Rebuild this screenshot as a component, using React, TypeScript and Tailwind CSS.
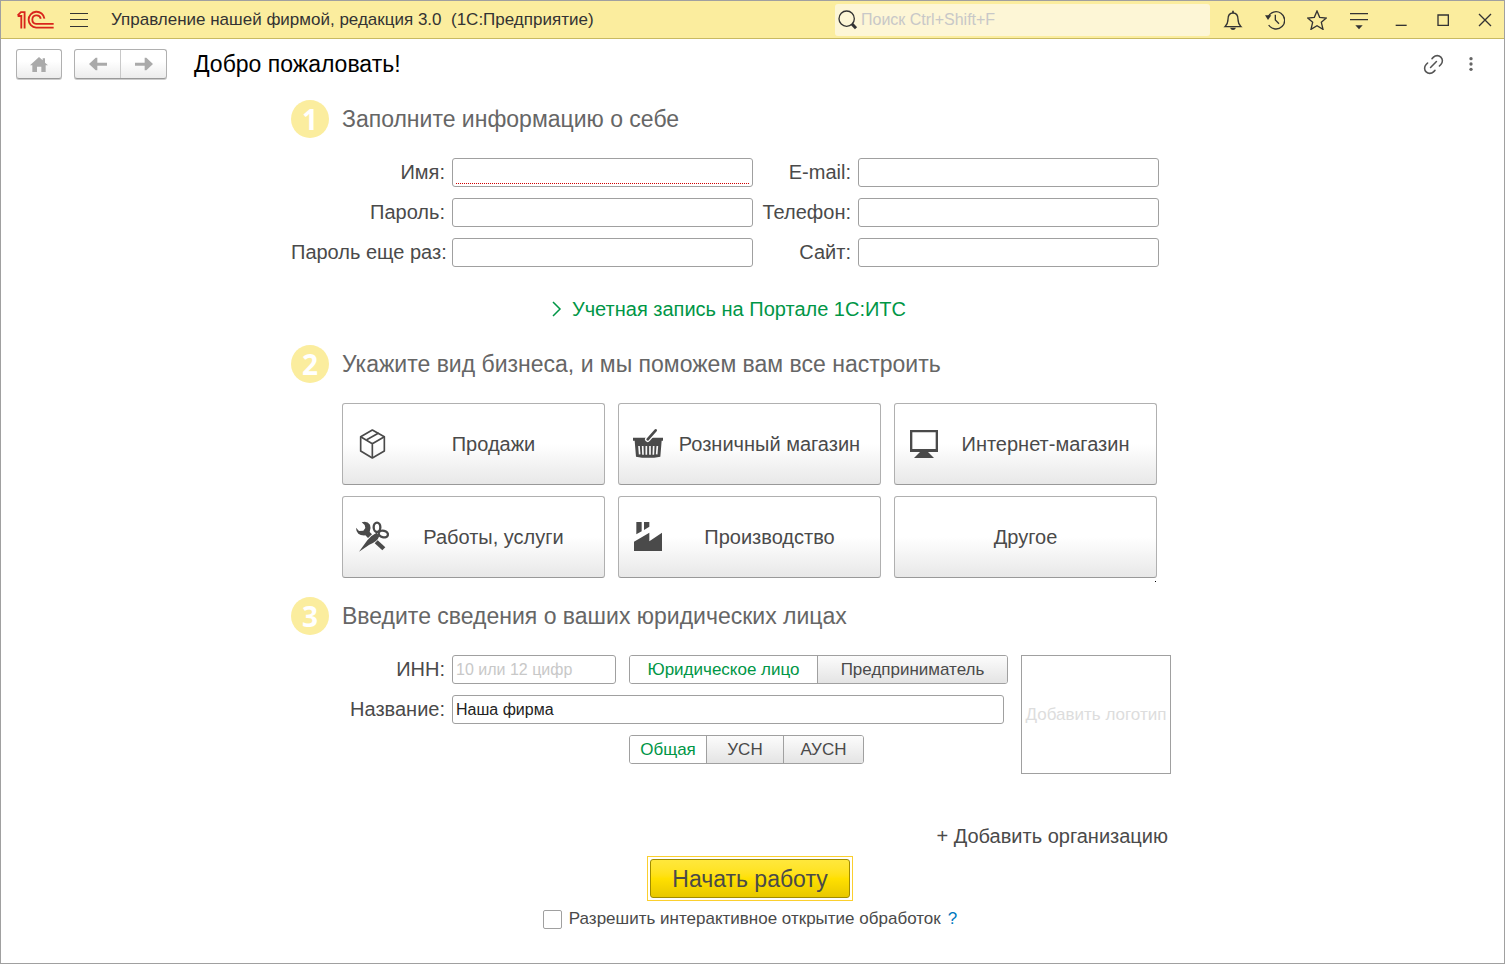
import { useState, type ReactNode } from 'react';
import { Link2 } from 'lucide-react';

const inputClass =
  'h-[29px] w-full min-w-0 rounded-[3px] border border-[#a0a0a0] bg-white px-[3px] text-[16px] text-[#222] outline-none placeholder:text-[#c8c8c8]';

const Logo = () => (
  <svg viewBox="50 28 112 57" className="h-[19px] w-[37px]" fill="none" stroke="#d9251c" strokeWidth="5.5">
    <path d="M52 44 L62 34 H73 V84" />
    <path d="M52 46 H63 V84" />
    <path d="M133 54 A24 24 0 1 0 108 81 H161" />
    <path d="M122 54 A13 13 0 1 0 108 70 H161" />
  </svg>
);

type HeaderIconProps = { label: string; viewBox: string; children: ReactNode };

const HeaderButton = ({ label, viewBox, children }: HeaderIconProps) => (
  <button aria-label={label} className="flex h-8 w-[38px] items-center justify-center">
    <svg viewBox={viewBox} className="h-5 w-5" fill="none" stroke="#333" strokeWidth="4">
      {children}
    </svg>
  </button>
);

const TitleBar = () => (
  <header className="flex h-[38px] items-center border-b border-[#c8ba62] bg-[#fbed9e]">
    <div className="pl-4">
      <Logo />
    </div>
    <button aria-label="Меню" className="ml-4 flex h-[14px] w-[18px] flex-col justify-between">
      <span className="h-px w-full bg-[#333]" />
      <span className="h-px w-full bg-[#333]" />
      <span className="h-px w-full bg-[#333]" />
    </button>
    <div className="ml-[23px] whitespace-pre text-[17px] text-[#333]">
      Управление нашей фирмой, редакция 3.0  (1С:Предприятие)
    </div>
    <label className="mr-1 ml-auto flex h-8 w-[375px] items-center rounded-[3px] bg-[#fdf6d6] pl-[3px]">
      <svg viewBox="0 0 60 60" className="h-5 w-5 shrink-0" fill="none" stroke="#333" strokeWidth="4">
        <circle cx="26" cy="26" r="23" />
        <path d="M42 42 L54 55" strokeWidth="9" />
      </svg>
      <input
        aria-label="Поиск"
        placeholder="Поиск Ctrl+Shift+F"
        className="ml-[3px] min-w-0 flex-1 bg-transparent text-[16px] outline-none placeholder:text-[#c8c8c8]"
      />
    </label>
    <div className="flex gap-1">
      <HeaderButton label="Уведомления" viewBox="54 28 60 60">
        <path d="M60 78 C66 72 69 66 69 56 C69 44 74 37 84 37 C94 37 99 44 99 56 C99 66 102 72 108 78 Z" />
        <path d="M84 30 V37" strokeWidth="5" />
        <path d="M75 81 H93 Q90 88 84 88 Q78 88 75 81 Z" fill="#333" stroke="none" />
      </HeaderButton>
      <HeaderButton label="История" viewBox="180 28 60 60">
        <path d="M189 49 A26 26 0 1 1 191 73" />
        <path d="M180 44 H199 L189 58 Z" fill="#333" stroke="none" />
        <path d="M211 42 V58 L222 69" />
      </HeaderButton>
      <HeaderButton label="Избранное" viewBox="306 28 60 60">
        <path d="M336 31 L344 50 L364 52 L349 65 L354 86 L336 75 L318 86 L323 65 L308 52 L328 50 Z" />
      </HeaderButton>
      <HeaderButton label="Настройки" viewBox="432 28 60 60">
        <path d="M435 39 H489 M435 57 H489" />
        <path d="M451 74 H473 L462 86 Z" fill="#333" stroke="none" />
      </HeaderButton>
      <HeaderButton label="Свернуть" viewBox="559 28 60 60">
        <path d="M573 74 H606" />
      </HeaderButton>
      <HeaderButton label="Развернуть" viewBox="685 28 60 60">
        <path d="M700 43 H731 V74 H700 Z" />
      </HeaderButton>
      <HeaderButton label="Закрыть" viewBox="810 28 60 60">
        <path d="M822 40 L858 76 M858 40 L822 76" />
      </HeaderButton>
    </div>
  </header>
);

const toolClass = 'flex flex-1 items-center justify-center';
const toolGroupClass =
  'flex h-[30px] rounded-[3px] border border-[#b0b0b0] border-b-[#999] bg-linear-to-b from-white from-40% to-[#ececec] shadow-[0_1px_0_#ccc]';

const Toolbar = () => (
  <div className="flex items-center px-[15px] pt-[10px]">
    <div className={`${toolGroupClass} w-[46px]`}>
      <button aria-label="Домой" className={toolClass}>
        <svg viewBox="90 166 54 48" className="h-4 w-[18px]" fill="#aaa">
          <path d="M90 194 L117 169 L128 179 V173 H135 V186 L144 194 H137 V214 H124 V198 H111 V214 H97 V194 Z" />
        </svg>
      </button>
    </div>
    <div className={`${toolGroupClass} ml-3 w-[93px]`}>
      <button aria-label="Назад" className={toolClass}>
        <svg viewBox="267 172 54 42" className="h-[14px] w-[18px]" fill="#aaa">
          <path d="M267 193 L287 174 H292 V189 H321 V198 H292 V212 H287 Z" />
        </svg>
      </button>
      <button aria-label="Вперед" className={`${toolClass} border-l border-[#c8c8c8]`}>
        <svg viewBox="403 172 54 42" className="h-[14px] w-[18px]" fill="#aaa">
          <path d="M457 193 L437 174 H432 V189 H403 V198 H432 V212 H437 Z" />
        </svg>
      </button>
    </div>
    <h1 className="ml-[27px] text-[23px] leading-7 text-black">Добро пожаловать!</h1>
    <button aria-label="Ссылка" className="ml-auto flex w-[26px] justify-center">
      <Link2 size={25} strokeWidth={1.5} color="#555" className="-rotate-45" />
    </button>
    <button aria-label="Ещё" className="ml-[7px] flex w-9 justify-center">
      <svg viewBox="0 0 12 42" className="h-[14px] w-1" fill="#666">
        <circle cx="6" cy="5" r="5" />
        <circle cx="6" cy="21" r="5" />
        <circle cx="6" cy="37" r="5" />
      </svg>
    </button>
  </div>
);

const StepTitle = ({ step, children }: { step: number; children: ReactNode }) => (
  <div className="flex items-center gap-[13px]">
    <span className="flex h-[38px] w-[38px] items-center justify-center rounded-full bg-[#fbed9e] font-['Open_Sans',sans-serif] text-[28px] leading-none font-bold text-white">
      {step}
    </span>
    <h2 className="text-[23px] leading-7 text-[#666]">{children}</h2>
  </div>
);

const Field = ({ id, label, type = 'text', required = false }: { id: string; label: string; type?: string; required?: boolean }) => (
  <>
    <label htmlFor={id} className="text-right text-[20px] whitespace-nowrap">
      {label}
    </label>
    <div className="relative flex">
      <input id={id} type={type} className={inputClass} />
      {required && <span className="absolute inset-x-1 bottom-[3px] border-b border-dotted border-[#d00000]" />}
    </div>
  </>
);

const BoxIcon = () => (
  <svg viewBox="222 288 108 108" className="h-9 w-9 shrink-0" fill="none" stroke="#4a4a4a" strokeWidth="5">
    <path d="M277 300 L313 320 V363 L277 384 L242 363 V320 Z" strokeLinejoin="round" />
    <path d="M242 320 L277 341 L313 320 M277 341 V384" />
    <path d="M260 329 L296 309" strokeWidth="5" />
  </svg>
);

const BasketIcon = () => (
  <svg viewBox="60 108 108 108" className="h-9 w-9 shrink-0" fill="#4a4a4a">
    <path d="M69 143 H159 V152 H155 L151 200 Q114 207 78 200 L74 152 H69 Z" />
    <path d="M87 168 L89 193 M98 168 L99 194 M109 168 V194 M120 168 V194 M131 168 L130 194 M142 168 L140 193" stroke="#f8f8f8" strokeWidth="5" />
    <path d="M113 148 L137 121" stroke="#fff" strokeWidth="16" strokeLinecap="round" />
    <path d="M113 148 L137 121" stroke="#4a4a4a" strokeWidth="8" strokeLinecap="round" />
  </svg>
);

const MonitorIcon = () => (
  <svg viewBox="63 108 108 108" className="h-9 w-9 shrink-0" fill="#4a4a4a">
    <path d="M75 120 H159 V186 H75 Z M82 127 V177 H152 V127 Z" fillRule="evenodd" />
    <path d="M105 186 H129 L147 204 H87 Z" />
  </svg>
);

const ToolsIcon = () => (
  <svg viewBox="222 567 108 108" className="h-9 w-9 shrink-0" fill="#4a4a4a">
    <path d="M228 593 L237 603 L250 602 L256 594 L254 585 L245 577 Q262 572 270 584 Q274 594 269 606 L276 613 L264 624 L256 616 Q242 617 235 611 Q228 604 228 593 Z" />
    <path d="M284 640 L293 631 L316 652 L307 661 Z" />
    <path d="M237 665 L262 631 Q276 614 290 608 L298 618 Q292 636 268 644 Z" />
    <ellipse cx="291" cy="592" rx="10" ry="14" fill="none" stroke="#4a4a4a" strokeWidth="7" />
    <ellipse cx="310" cy="612" rx="14" ry="10" fill="none" stroke="#4a4a4a" strokeWidth="7" transform="rotate(15 310 612)" />
  </svg>
);

const FactoryIcon = () => (
  <svg viewBox="60 387 108 108" className="h-9 w-9 shrink-0" fill="#4a4a4a">
    <path d="M72 483 V455 L118 428 V454 L156 428 V483 Z" />
    <path d="M79 396 H95 V424 L79 433 Z" />
    <path d="M102 396 H118 V410 L102 420 Z" />
  </svg>
);

const businessTypes = [
  { name: 'Продажи', icon: <BoxIcon /> },
  { name: 'Розничный магазин', icon: <BasketIcon /> },
  { name: 'Интернет-магазин', icon: <MonitorIcon /> },
  { name: 'Работы, услуги', icon: <ToolsIcon /> },
  { name: 'Производство', icon: <FactoryIcon /> },
  { name: 'Другое', icon: null },
];

type SegmentsProps = { name: string; options: { label: string; width: string }[] };

const Segments = ({ name, options }: SegmentsProps) => {
  const [selected, setSelected] = useState(options[0].label);
  return (
    <div
      role="radiogroup"
      aria-label={name}
      className="flex h-[29px] shrink-0 overflow-hidden rounded-[3px] border border-[#a0a0a0]"
    >
      {options.map((option) => (
        <label
          key={option.label}
          className={`${option.width} relative flex items-center justify-center border-l border-[#a0a0a0] bg-linear-to-b from-[#fcfcfc] to-[#e4e4e4] text-[17px] whitespace-nowrap first:border-l-0 has-checked:from-white has-checked:to-white has-checked:text-[#009646]`}
        >
          <input
            type="radio"
            name={name}
            className="sr-only"
            checked={selected === option.label}
            onChange={() => setSelected(option.label)}
          />
          {option.label}
        </label>
      ))}
    </div>
  );
};

const App = () => {
  return (
    <div className="flex min-h-screen flex-col border border-[#a0a0a0] bg-white font-['Liberation_Sans',Arial,sans-serif] text-[#4a4a4a]">
      <TitleBar />
      <Toolbar />

      <main className="mx-auto w-full max-w-[923px] pt-[21px]">
        {/* Step 1 */}
        <StepTitle step={1}>Заполните информацию о себе</StepTitle>
        <div className="mt-5 grid max-w-[868px] grid-cols-[154px_1fr_91px_1fr] items-center gap-x-[7px] gap-y-[11px] leading-[29px]">
          <Field id="name" label="Имя:" required />
          <Field id="email" label="E-mail:" type="email" />
          <Field id="password" label="Пароль:" type="password" />
          <Field id="phone" label="Телефон:" type="tel" />
          <Field id="password2" label="Пароль еще раз:" type="password" />
          <Field id="site" label="Сайт:" />
        </div>
        <div className="mt-7 flex max-w-[876px] justify-center">
          <button className="flex items-center gap-[10px] text-[20px] leading-7 text-[#009646]">
            <svg viewBox="0 0 10 16" className="h-4 w-[10px]" fill="none" stroke="#009646" strokeWidth="1.5">
              <path d="M1 1 L8 8 L1 15" />
            </svg>
            Учетная запись на Портале 1С:ИТС
          </button>
        </div>

        {/* Step 2 */}
        <div className="mt-[22px]">
          <StepTitle step={2}>Укажите вид бизнеса, и мы поможем вам все настроить</StepTitle>
        </div>
        <div className="mt-5 ml-[51px] grid max-w-[815px] grid-cols-3 gap-x-[13px] gap-y-[11px]">
          {businessTypes.map((type) => (
            <button
              key={type.name}
              className={`${type.icon ? 'pr-[7px] pl-[11px]' : 'px-2'} flex h-[82px] items-center rounded-[3px] border border-[#b0b0b0] border-b-[#999] bg-linear-to-b from-white from-50% to-[#e8e8e8] text-[20px]`}
            >
              {type.icon}
              <span className="flex-1">{type.name}</span>
            </button>
          ))}
        </div>
        <div className="mt-[3px] ml-[51px] flex max-w-[814px] justify-end">
          <span className="h-px w-px bg-black" />
        </div>

        {/* Step 3 */}
        <div className="mt-[15px]">
          <StepTitle step={3}>Введите сведения о ваших юридических лицах</StepTitle>
        </div>
        <div className="mt-5 flex max-w-[880px] items-start gap-[13px]">
          <div className="grid flex-1 grid-cols-[154px_1fr] items-center gap-x-[7px] gap-y-[11px] leading-[29px]">
            <label htmlFor="inn" className="text-right text-[20px]">ИНН:</label>
            <div className="flex gap-[13px]">
              <input id="inn" placeholder="10 или 12 цифр" className={inputClass} />
              <Segments
                name="Вид организации"
                options={[
                  { label: 'Юридическое лицо', width: 'w-[187px]' },
                  { label: 'Предприниматель', width: 'w-[190px]' },
                ]}
              />
            </div>
            <label htmlFor="company" className="text-right text-[20px]">Название:</label>
            <div className="flex pr-1">
              <input id="company" defaultValue="Наша фирма" className={inputClass} />
            </div>
            <div className="col-start-2 flex pl-[177px]">
              <Segments
                name="Налогообложение"
                options={[
                  { label: 'Общая', width: 'w-[76px]' },
                  { label: 'УСН', width: 'w-[77px]' },
                  { label: 'АУСН', width: 'w-[80px]' },
                ]}
              />
            </div>
          </div>
          <button className="h-[119px] w-[150px] shrink-0 border border-[#a0a0a0] text-[17px] whitespace-nowrap text-[#ddd]">
            Добавить логотип
          </button>
        </div>
        <div className="mt-12 flex max-w-[877px] justify-end">
          <button className="text-[20px] leading-7">+ Добавить организацию</button>
        </div>

        <div className="mt-[6px] flex max-w-[918px] flex-col items-center">
          <div className="border border-[#fbcf2e] p-[2px]">
            <button className="h-[39px] w-[200px] rounded-[3px] border border-[#a08c00] bg-linear-to-b from-[#ffe83c] via-[#ffe000] to-[#e8c800] text-[23px] leading-7">
              Начать работу
            </button>
          </div>
          <div className="mt-2 flex items-center">
            <input
              id="allow"
              type="checkbox"
              className="h-[19px] w-[19px] appearance-none rounded-[2px] border border-[#a0a0a0] bg-white checked:bg-[#009646]"
            />
            <label htmlFor="allow" className="ml-[7px] text-[17px] leading-5">
              Разрешить интерактивное открытие обработок
            </label>
            <a href="#" className="ml-[7px] text-[17px] leading-5 text-[#0078c0]">?</a>
          </div>
        </div>
      </main>
    </div>
  );
};

export default App;
